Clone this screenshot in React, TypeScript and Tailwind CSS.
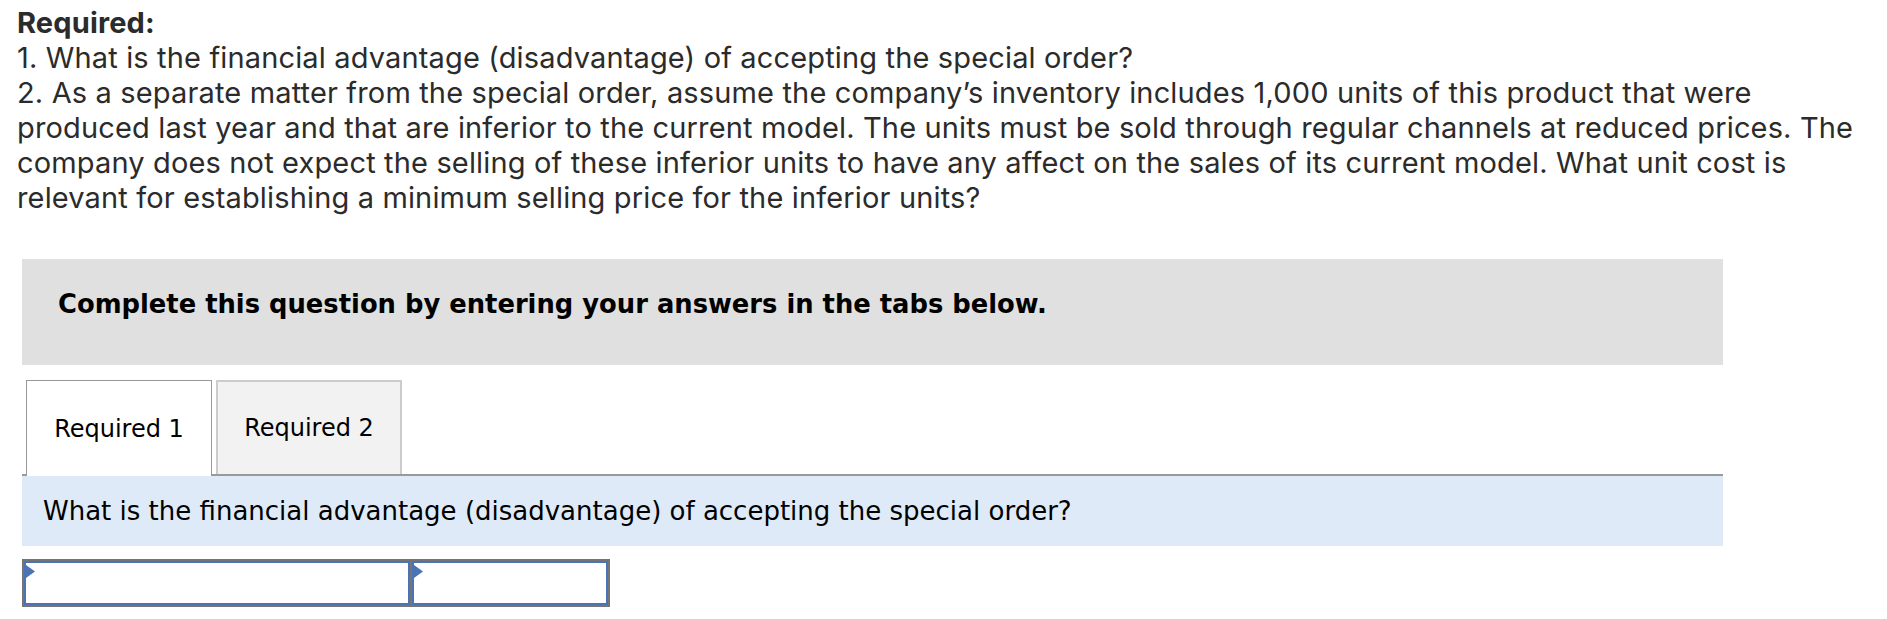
import React from "react";

const topLines = [
  "2. As a separate matter from the special order, assume the company\u2019s inventory includes 1,000 units of this product that were",
  "produced last year and that are inferior to the current model. The units must be sold through regular channels at reduced prices. The",
  "company does not expect the selling of these inferior units to have any affect on the sales of its current model. What unit cost is",
  "relevant for establishing a minimum selling price for the inferior units?",
];

function Marker() {
  return (
    <svg className="absolute left-0 top-[2px]" width="9" height="13" viewBox="0 0 9 13">
      <polygon points="0,0 9,6.5 0,13" fill="#4a74b5" />
    </svg>
  );
}

export default function App() {
  return (
    <div className="min-h-[619px] w-[1887px] bg-white">
      <div
        className="pl-[17px] pt-[5px] text-[29px] leading-[35px] tracking-[0.15px] text-[#2b2b2b]"
        style={{ fontFamily: "Inter, 'Open Sans', sans-serif" }}
      >
        <div className="font-bold">Required:</div>
        <div className="whitespace-nowrap">1. What is the financial advantage (disadvantage) of accepting the special order?</div>
        {topLines.map((l, i) => (
          <div key={i} className="whitespace-nowrap">
            {l}
          </div>
        ))}
      </div>

      <div
        className="ml-[22px] mt-[44px] w-[1701px]"
        style={{ fontFamily: "'DejaVu Sans', Verdana, sans-serif" }}
      >
        <div className="h-[106px] bg-[#e0e0e0] pl-[36px] pt-[29px] text-[25.8px] font-bold leading-[32px] text-black">
          Complete this question by entering your answers in the tabs below.
        </div>

        <div className="mt-[15px] flex items-end gap-[4px] border-b-2 border-[#999999] pl-[4px]">
          <div className="relative -mb-[2px] flex h-[96px] w-[186px] items-center justify-center border border-b-0 border-[#999999] bg-white text-[24px] text-black">
            Required 1
          </div>
          <div className="flex h-[94px] w-[186px] items-center justify-center border-2 border-b-0 border-[#cccccc] bg-[#f2f2f2] text-[24px] text-black">
            Required 2
          </div>
        </div>

        <div className="flex h-[70px] items-center bg-[#deeaf7] pl-[21px] text-[26px] text-black">
          What is the financial advantage (disadvantage) of accepting the special order?
        </div>

        <div className="mt-[13px] flex h-[48px] w-[588px] gap-[2px] border-2 border-[#757575] bg-[#757575]">
          <div className="relative h-full w-[386px] border-2 border-[#4a74b5] bg-white">
            <Marker />
          </div>
          <div className="relative h-full flex-1 border-2 border-[#4a74b5] bg-white">
            <Marker />
          </div>
        </div>
      </div>
    </div>
  );
}
